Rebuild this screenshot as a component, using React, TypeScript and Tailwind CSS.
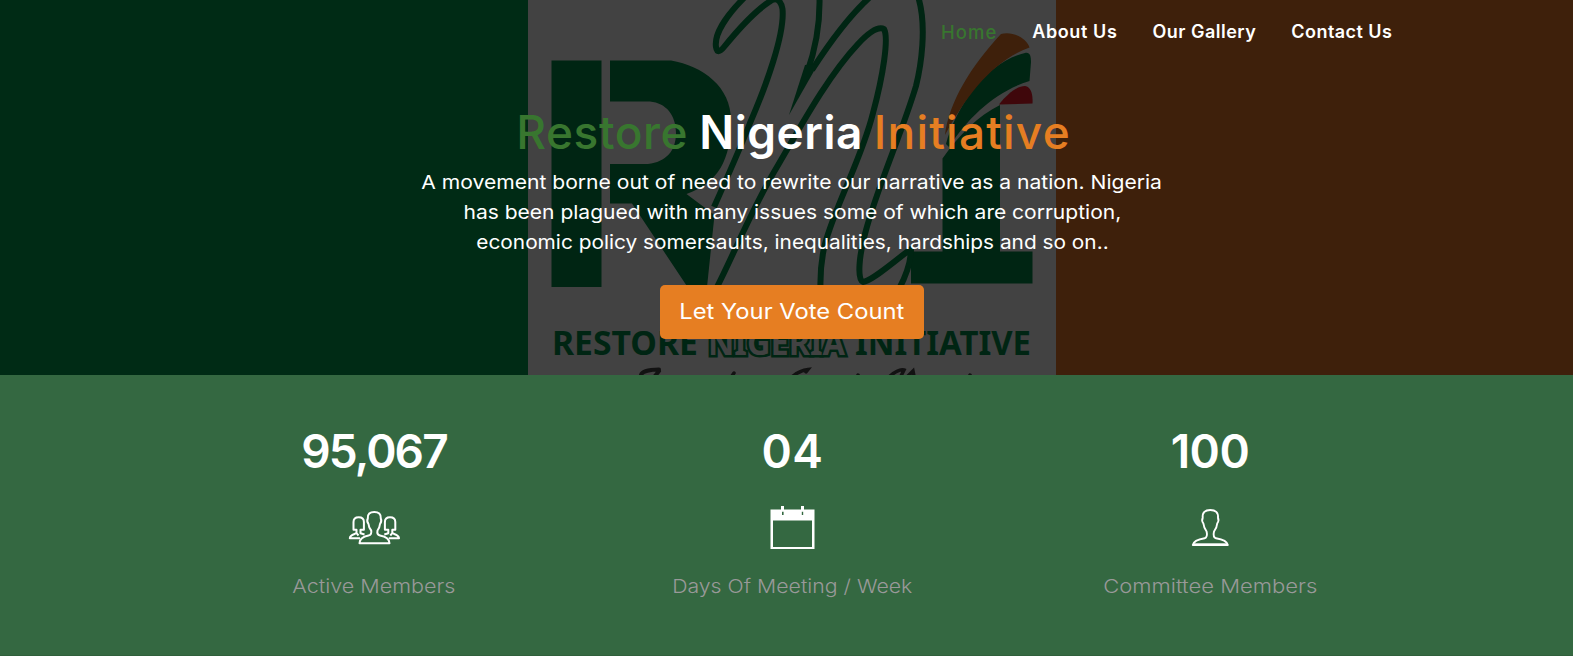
import type { ReactNode } from 'react';

function Logo() {
  return (
    <svg viewBox="528 0 528 375" className="h-[375px] w-[528px]" fill="none" aria-hidden="true">
      <g fill="#002513">
        <path d="M551.5 60.500H601.500V287H551.500Z" />
        <path d="M610 60.500H671C703 66 731 87 731 120C731 160 718 183 686.500 194L714.500 215L707 287H687.500L632 203.500H610V164H648C666 162 676 151 676 133C676 115 666 103 650 101.500H610Z" />
        <path d="M942.500 158.500C960 134 978 116 1000 105V251.500H1032.500V283.500H911V251.500H942.500Z" />
        <path d="M946 144C956 106 988 61 1025 53C1030 52 1031 56 1031 62L1029.500 81C997 91 969 116 949 147Z" />
      </g>
      <path d="M945 135C949 102 971 66 1001 34C1014 31 1027 39 1029.500 47.500C994 60 967 94 945 135Z" fill="#3e200b" />
      <path d="M999 104.500C1007 94 1017 86 1025 86C1031 87 1033 94 1032.500 103.500Z" fill="#3f070b" />
      <g stroke="#002513" strokeWidth="6" strokeLinejoin="round">
        <path d="M744 -2C727 15 714 34 716 47C717 53 720 52 724 47C737 31 754 12 769 2C777 -4 781 1 782.500 9C785 34 766 86 750 123C739 151 727 178 714 207" />
        <path d="M819.500 -2C820 22 816 48 807 73" />
        <path d="M870 -3C847 18 828 45 812 70" />
        <path d="M716 289C734 254 750 213 774 172C795 137 825 79 858 44C870 31 879 26 884 29C889 38 883 76 873 113C862 158 835 206 825 244C821 260 820 272 820.500 289" />
        <path d="M918.500 -2C927 27 921 66 916 86C902 133 876 190 865 234C859 256 857 280 863 282C872 281 893 262 911 249C911 260 908 272 899 289" />
      </g>
      <path d="M805 65L789 115L818 64Z" fill="#002513" />
      <g fill="#002513" fontFamily="Noto Sans, sans-serif" fontWeight="700" fontSize="34">
        <text x="552" y="355" textLength="146" lengthAdjust="spacingAndGlyphs">RESTORE</text>
        <text x="855" y="355" textLength="176" lengthAdjust="spacingAndGlyphs">INITIATIVE</text>
        <text x="708" y="355" textLength="137" lengthAdjust="spacingAndGlyphs" fill="#424242" stroke="#002513" strokeWidth="5" paintOrder="stroke">NIGERIA</text>
      </g>
      <g stroke="#121212" strokeWidth="4" strokeLinecap="round">
        <path d="M641 375C642 371 651 369.500 659 369.500M655 376L659 371" />
        <path d="M734 373L732 376M793 376C798 372 803 370 808 369.500L806 372M858 375L857 377M890 376C896 371 901 369 904 370L901 376M907 377L913 371L914 376M970 375L969 377" strokeWidth="3.500" />
      </g>
    </svg>
  );
}

function UsersIcon() {
  return (
    <svg viewBox="346 498 56 60" className="h-[60px] w-[56px]" fill="none" stroke="#fff" strokeWidth="2" strokeLinejoin="round">
      <path d="M359.500 543.200H389.500C389.500 538 385 536.500 380 535.500C377.500 535 377 533 377.500 530.500C379 528.500 379.800 526.500 380 524C381.500 522 381.500 520 380.800 518.500C381.200 514 378.500 511.900 374.300 511.900C370 511.900 367.300 514 367.800 518.500C367 520 367 522 368.500 524C368.700 526.500 369.500 528.500 371.200 530.500C371.700 533 371 535 368.500 535.500C363.500 536.500 359.500 538 359.500 543.200Z" />
      <path d="M360 538.200H349.800C350 534.800 353.500 534.500 356.500 533.200V529.800H353.500V522C353.500 518.500 355.300 517.300 358.700 517.300C362.200 517.300 363.900 518.500 363.900 522V529.800H360.500V533.200L364.500 534.500M356.500 533.200L358.500 535.500" />
      <path d="M388.800 538.200H399C398.700 534.800 395.300 534.500 392.300 533.200V529.800H395.300V522C395.300 518.500 393.500 517.300 390 517.300C386.600 517.300 384.900 518.500 384.900 522V529.800H388.300V533.200L384.300 534.500M392.300 533.200L390.300 535.500" />
    </svg>
  );
}

function CalendarIcon() {
  return (
    <svg viewBox="764 498 56 60" className="h-[60px] w-[56px]" fill="#fff">
      <path fillRule="evenodd" d="M770.500 509.500H781V506H784V509.500H801V506H804V509.500H814.500V549H770.500ZM773 520.500V547H812V520.500ZM782 511.800V515H783.600V511.800ZM801.800 511.800V515H803.200V511.800Z" />
    </svg>
  );
}

function UserIcon() {
  return (
    <svg viewBox="1182 498 56 60" className="h-[60px] w-[56px]" fill="none" stroke="#fff" strokeWidth="1.900" strokeLinejoin="round">
      <path d="M1192.800 545H1227.800C1227 541 1223 539.500 1216 538.300C1213.500 537.500 1213.300 534.500 1214 531.500C1216 529 1217 526.500 1217.200 523.500C1218.700 521.500 1218.700 519.500 1218 518C1218.500 512.500 1215.500 510 1210.300 510C1205 510 1202.200 512.500 1202.700 518C1201.900 519.500 1201.900 521.500 1203.400 523.500C1203.700 526.500 1204.700 529 1206.600 531.500C1207.300 534.500 1207 537.500 1204.600 538.300C1197.600 539.500 1193.600 541 1192.800 545Z" />
      <path d="M1194 543.500H1226.500" strokeWidth="1" opacity=".7" />
    </svg>
  );
}

function Stat({ value, label, children }: { value: ReactNode; label: ReactNode; children: ReactNode }) {
  return (
    <div className="flex flex-col items-center pt-[47px]">
      <div className="text-[46px] font-semibold leading-[58px] text-white">{value}</div>
      <div className="mt-[18px]">{children}</div>
      <div className="mt-[14px] whitespace-nowrap text-[19px] font-light leading-[30px] text-[#999999]">{label}</div>
    </div>
  );
}

export default function App() {
  return (
    <div className="h-[656px] w-full overflow-hidden bg-[#346841] font-['Inter',sans-serif]">
      <div className="w-[1584px]">
        <header className="relative h-[375px]">
          <div className="absolute inset-0 grid grid-cols-3">
            <div className="bg-[#002b15]" />
            <div className="bg-[#424242]">
              <Logo />
            </div>
            <div className="bg-[#3e200b]" />
          </div>
          <div className="relative flex h-full flex-col">
            <nav className="flex gap-[35px] whitespace-nowrap pl-[941px] pt-[18px] text-lg leading-7 font-semibold text-white">
              <a className="text-[18.5px] font-medium tracking-[1px] text-[#38762f]">Home</a>
              <a className="tracking-[0.6px]">About Us</a>
              <a className="tracking-[0.5px]">Our Gallery</a>
              <a className="tracking-[0.45px]">Contact Us</a>
            </nav>
            <div className="mt-[57px] flex flex-col items-center">
              <h1 className="flex gap-[11px] pl-[3px] text-[46px] font-medium leading-[58px]">
                <span className="tracking-[0.6px] text-[#38762f]">Restore</span>
                <span className="font-semibold tracking-[0.5px] text-white">Nigeria</span>
                <span className="tracking-[1.2px] text-[#e67e22]">Initiative</span>
              </h1>
              <p className="mt-[7px] flex flex-col items-center whitespace-nowrap text-[19px] leading-[30px] text-white">
                <span className="scale-x-[1.11]">A movement borne out of need to rewrite our narrative as a nation. Nigeria</span>
                <span className="scale-x-[1.106]">has been plagued with many issues some of which are corruption,</span>
                <span className="scale-x-[1.096]">economic policy somersaults, inequalities, hardships and so on..</span>
              </p>
              <button className="mt-[27px] h-[54px] w-[264px] rounded-[5px] bg-[#e67e22] pb-[2px] text-[21.5px] text-white">
                <span className="inline-block scale-x-[1.105] whitespace-nowrap">Let Your Vote Count</span>
              </button>
            </div>
          </div>
        </header>
        <section className="grid h-[280px] grid-cols-3 px-[165px]">
          <Stat value={<span className="tracking-[-1.9px]">95,067</span>} label={<span className="inline-block scale-x-[1.135]">Active Members</span>}>
            <UsersIcon />
          </Stat>
          <Stat value={<span className="pl-[1px] tracking-[0.5px]">04</span>} label={<span className="inline-block scale-x-[1.12]">Days Of Meeting / Week</span>}>
            <CalendarIcon />
          </Stat>
          <Stat value={<span className="tracking-[-0.5px]">100</span>} label={<span className="inline-block scale-x-[1.16]">Committee Members</span>}>
            <UserIcon />
          </Stat>
        </section>
        <div className="h-px bg-[#2f5f3b]" />
      </div>
    </div>
  );
}
